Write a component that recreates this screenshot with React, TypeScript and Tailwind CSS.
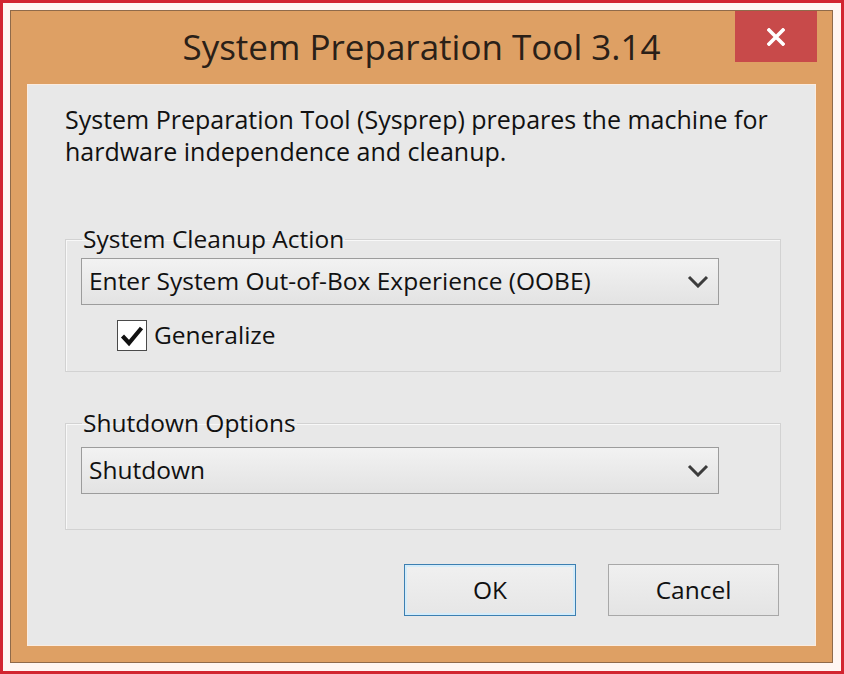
import React from 'react';

const font = { fontFamily: '"Open Sans", "Noto Sans", sans-serif' };

const Chevron = () => (
  <svg width="22" height="13" viewBox="0 0 22 13" className="shrink-0">
    <path d="M2 2 L11 11 L20 2" fill="none" stroke="#3c3c3c" strokeWidth="3" strokeLinejoin="miter" />
  </svg>
);

const Dropdown = ({ value }: { value: string }) => (
  <div className="flex items-center justify-between w-[638px] h-[47px] border border-[#9c9c9c] bg-gradient-to-b from-[#f2f2f2] to-[#e3e3e3] pl-[7px] pr-[9px]">
    <span className="text-[24.5px] leading-none text-[#111]">{value}</span>
    <Chevron />
  </div>
);

const GroupBox = ({ title, children, className }: { title: string; children: React.ReactNode; className?: string }) => (
  <fieldset className={`w-[716px] border border-[#d2d2d2] shadow-[inset_1px_1px_0_#f8f8f8] pl-[15px] ${className ?? ''}`}>
    <legend className="ml-[1px] px-[1px] text-[24.5px] leading-[32px] text-[#111]">{title}</legend>
    {children}
  </fieldset>
);

export default function App() {
  return (
    <div className="w-[844px] h-[674px] bg-[#fff6f2] border-[3px] border-[#d22530] pt-[7px] pl-[7px]" style={font}>
      <div className="w-[823px] h-[653px] bg-[#dea064] border border-[#8f6a4a] flex flex-col px-[16px] pb-[16px]">
        <div className="relative h-[73px] flex items-start justify-center shrink-0">
          <h1 className="mt-[14px] text-[35px] leading-[44px] text-[#2a2018]">System Preparation Tool 3.14</h1>
          <button className="absolute right-[-1px] top-0 w-[82px] h-[51px] bg-[#c84a4a] flex items-center justify-center">
            <svg width="18" height="18" viewBox="0 0 18 18">
              <path d="M2 2 L16 16 M16 2 L2 16" stroke="#fff" strokeWidth="3.6" strokeLinecap="square" />
            </svg>
          </button>
        </div>
        <div className="flex-1 border border-[#fbece0] bg-[#e8e8e8] flex flex-col pl-[37px] pt-[18px]">
          <p className="text-[25px] leading-[32px] text-[#111]">
            System Preparation Tool (Sysprep) prepares the machine for
            <br />
            hardware independence and cleanup.
          </p>

          <GroupBox title="System Cleanup Action" className="mt-[56px] pb-[20px]">
            <div className="mt-[3px]">
              <Dropdown value="Enter System Out-of-Box Experience (OOBE)" />
            </div>
            <div className="mt-[15px] ml-[36px] flex items-center gap-[7px]">
              <div className="w-[30px] h-[31px] border border-[#4a4a4a] bg-white flex items-center justify-center">
                <svg width="24" height="22" viewBox="0 0 24 22">
                  <path d="M2.5 11 L9 18 L21.5 3" fill="none" stroke="#111" strokeWidth="4.2" />
                </svg>
              </div>
              <span className="text-[24.5px] leading-none text-[#111]">Generalize</span>
            </div>
          </GroupBox>

          <GroupBox title="Shutdown Options" className="mt-[35px] pb-[35px]">
            <div className="mt-[8px]">
              <Dropdown value="Shutdown" />
            </div>
          </GroupBox>

          <div className="w-[716px] mt-[34px] flex justify-end gap-[32px]">
            <button className="w-[172px] h-[52px] border border-[#3c7fb1] shadow-[inset_0_0_0_2px_#d4ecfa] bg-gradient-to-b from-[#f0f0f0] to-[#e6e6e6] text-[24.5px] text-[#111]">
              OK
            </button>
            <button className="w-[171px] h-[52px] border border-[#a8a8a8] bg-gradient-to-b from-[#f0f0f0] to-[#e4e4e4] text-[24.5px] text-[#111] mr-[2px]">
              Cancel
            </button>
          </div>
        </div>
      </div>
    </div>
  );
}
